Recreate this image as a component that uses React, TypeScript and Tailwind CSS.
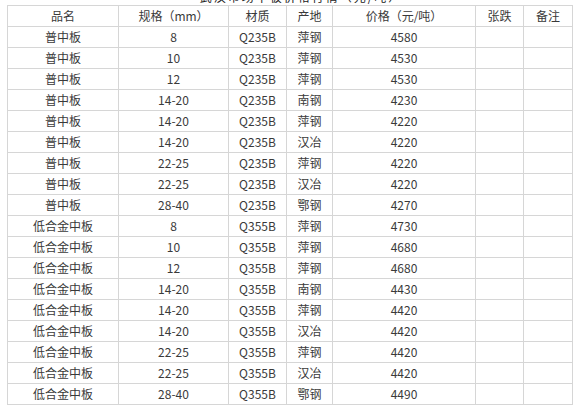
import React from 'react';

type Row = {
  name: string;
  spec: string;
  grade: string;
  origin: string;
  price: string;
};

const rows: Row[] = [
  { name: '普中板', spec: '8', grade: 'Q235B', origin: '萍钢', price: '4580' },
  { name: '普中板', spec: '10', grade: 'Q235B', origin: '萍钢', price: '4530' },
  { name: '普中板', spec: '12', grade: 'Q235B', origin: '萍钢', price: '4530' },
  { name: '普中板', spec: '14-20', grade: 'Q235B', origin: '南钢', price: '4230' },
  { name: '普中板', spec: '14-20', grade: 'Q235B', origin: '萍钢', price: '4220' },
  { name: '普中板', spec: '14-20', grade: 'Q235B', origin: '汉冶', price: '4220' },
  { name: '普中板', spec: '22-25', grade: 'Q235B', origin: '萍钢', price: '4220' },
  { name: '普中板', spec: '22-25', grade: 'Q235B', origin: '汉冶', price: '4220' },
  { name: '普中板', spec: '28-40', grade: 'Q235B', origin: '鄂钢', price: '4270' },
  { name: '低合金中板', spec: '8', grade: 'Q355B', origin: '萍钢', price: '4730' },
  { name: '低合金中板', spec: '10', grade: 'Q355B', origin: '萍钢', price: '4680' },
  { name: '低合金中板', spec: '12', grade: 'Q355B', origin: '萍钢', price: '4680' },
  { name: '低合金中板', spec: '14-20', grade: 'Q355B', origin: '南钢', price: '4430' },
  { name: '低合金中板', spec: '14-20', grade: 'Q355B', origin: '萍钢', price: '4420' },
  { name: '低合金中板', spec: '14-20', grade: 'Q355B', origin: '汉冶', price: '4420' },
  { name: '低合金中板', spec: '22-25', grade: 'Q355B', origin: '萍钢', price: '4420' },
  { name: '低合金中板', spec: '22-25', grade: 'Q355B', origin: '汉冶', price: '4420' },
  { name: '低合金中板', spec: '28-40', grade: 'Q355B', origin: '鄂钢', price: '4490' },
];

const headers = ['品名', '规格（mm）', '材质', '产地', '价格（元/吨）', '张跌', '备注'];

const cell = 'h-[21px] p-0 border border-[#d6d6d6] text-center align-middle leading-none';

export default function App() {
  return (
    <div
      className="w-[577px] h-[411px] bg-white text-[#3a3a3a] text-[12px] overflow-hidden"
      style={{ fontFamily: '"Noto Sans CJK SC", "Liberation Sans", sans-serif' }}
    >
      {/* title row: only its lower edge is inside the shot */}
      <div className="h-[5px] overflow-hidden pl-[190px]">
        <div className="-mt-[10px] w-[222px] text-center text-[12px] leading-[14px] text-[#222] tracking-[2px] whitespace-nowrap">
          武汉市场中板价格行情（元/吨）
        </div>
      </div>

      <table className="ml-[7px] w-[565px] table-fixed border-collapse">
        <colgroup>
          <col className="w-[111px]" />
          <col className="w-[110px]" />
          <col className="w-[58px]" />
          <col className="w-[46px]" />
          <col className="w-[143px]" />
          <col className="w-[48px]" />
          <col className="w-[49px]" />
        </colgroup>
        <thead>
          <tr>
            {headers.map((h) => (
              <th key={h} className={`${cell} font-normal`}>
                {h}
              </th>
            ))}
          </tr>
        </thead>
        <tbody>
          {rows.map((r, i) => (
            <tr key={i}>
              <td className={cell}>{r.name}</td>
              <td className={cell}>{r.spec}</td>
              <td className={cell}>{r.grade}</td>
              <td className={cell}>{r.origin}</td>
              <td className={cell}>{r.price}</td>
              <td className={cell}></td>
              <td className={cell}></td>
            </tr>
          ))}
        </tbody>
      </table>
    </div>
  );
}
